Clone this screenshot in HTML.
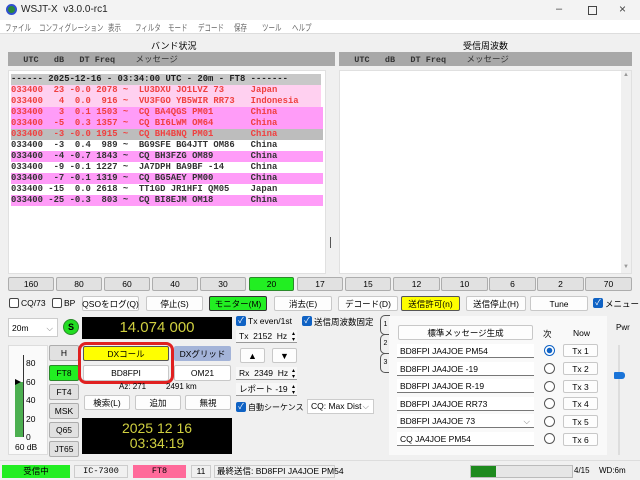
<!DOCTYPE html>
<html><head><meta charset="utf-8"><style>
*{box-sizing:border-box;margin:0;padding:0}
body{width:640px;height:480px;overflow:hidden;background:#f0f0f0;font-family:"Liberation Sans","Noto Sans CJK JP",sans-serif;font-size:8.5px;color:#000;position:relative}
.a{position:absolute;white-space:nowrap}
.b{position:absolute;background:#fdfdfd;border:1px solid #c8c8c8;border-radius:2px;text-align:center;font-size:8.5px;display:flex;align-items:center;justify-content:center;white-space:nowrap}
.g{background:#e1e1e1;border-color:#adadad}
.mono{font-family:"Liberation Mono","Noto Sans CJK JP",monospace}
.row{position:absolute;left:11px;height:11px;line-height:11px;font-family:"Liberation Mono",monospace;font-size:8.9px;font-weight:bold;white-space:pre;color:#333}
.cb{position:absolute;width:10px;height:10px;border-radius:2px;background:#0f62c4;color:#fff;font-size:8px;line-height:10px;text-align:center}
.cbe{position:absolute;width:10px;height:10px;border:1px solid #444;border-radius:2px;background:#fff}
.fld{position:absolute;left:397px;width:137px;height:14px;background:#fff;border-bottom:1px solid #777;font-size:8.5px;line-height:14px;padding-left:3px}
.rad{position:absolute;left:544px;width:11px;height:11px;border:1px solid #555;border-radius:50%;background:#fff}
.tx{position:absolute;left:563px;width:35px;height:13px}
.m{position:absolute;top:21px;font-size:9px;color:#666;white-space:nowrap;transform:scaleX(0.72);transform-origin:0 0}
</style></head><body>
<div class="a" style="left:0;top:0;width:640px;height:20px;background:#f3f3f3"></div>
<div class="a" style="left:6px;top:4px;width:11px;height:11px;border-radius:50%;background:#2a8a3a;border:2px solid #3050d0"></div>
<div class="a" style="left:21px;top:4px;font-size:10px;color:#222">WSJT-X&nbsp; v3.0.0-rc1</div>
<div class="a" style="left:556px;top:3px;font-size:11px;color:#444">–</div>
<div class="a" style="left:588px;top:6px;width:9px;height:9px;border:1px solid #444"></div>
<div class="a" style="left:619px;top:2px;font-size:12px;color:#444">×</div>
<div class="a" style="left:0;top:20px;width:640px;height:13px;background:#fff"></div>
<div class="m" style="left:5px">ファイル</div>
<div class="m" style="left:39px">コンフィグレーション</div>
<div class="m" style="left:108px">表示</div>
<div class="m" style="left:135px">フィルタ</div>
<div class="m" style="left:168px">モード</div>
<div class="m" style="left:198px">デコード</div>
<div class="m" style="left:234px">保存</div>
<div class="m" style="left:262px">ツール</div>
<div class="m" style="left:292px">ヘルプ</div>
<div class="a" style="left:0;top:33px;width:640px;height:1px;background:#ddd"></div>
<div class="a" style="left:151px;top:39px;font-size:9px">バンド状況</div>
<div class="a" style="left:463px;top:39px;font-size:9px">受信周波数</div>
<div class="a mono" style="left:8px;top:52px;width:327px;height:14px;background:#a8a8a8;font-size:8.5px;line-height:14px;font-weight:bold;color:#333;white-space:pre">   UTC   dB   DT Freq    <span style="font-family:'Noto Sans CJK JP';font-weight:normal">メッセージ</span></div>
<div class="a mono" style="left:339px;top:52px;width:293px;height:14px;background:#a8a8a8;font-size:8.5px;line-height:14px;font-weight:bold;color:#333;white-space:pre">   UTC   dB   DT Freq    <span style="font-family:'Noto Sans CJK JP';font-weight:normal">メッセージ</span></div>
<div class="a" style="left:8px;top:70px;width:318px;height:204px;background:#fff;border:1px solid #e0e0e0"></div>
<div class="a" style="left:329px;top:70px;width:6px;height:204px;background:#f0f0f0"></div>
<div class="a" style="left:330px;top:237px;width:1px;height:11px;background:#555"></div>
<div class="row" style="top:74px;width:310px;background:#c8c8c8;color:#222">------ 2025-12-16 - 03:34:00 UTC - 20m - FT8 -------</div>
<div class="row" style="top:85px;width:310px;background:#ffd0f0;color:#f04040">033400  23 -0.0 2078 ~  LU3DXU JO1LVZ 73     Japan</div>
<div class="row" style="top:96px;width:310px;background:#ffd0f0;color:#f04040">033400   4  0.0  916 ~  VU3FGO YB5WIR RR73   Indonesia</div>
<div class="row" style="top:107px;width:312px;background:#ff9cf8;color:#f04040">033400   3  0.1 1503 ~  CQ BA4QGS PM01       China</div>
<div class="row" style="top:118px;width:312px;background:#ff9cf8;color:#f04040">033400  -5  0.3 1357 ~  CQ BI6LWM OM64       China</div>
<div class="row" style="top:129px;width:312px;background:#bdbdbd;color:#f04040">033400  -3 -0.0 1915 ~  CQ BH4BNQ PM01       China</div>
<div class="row" style="top:140px">033400  -3  0.4  989 ~  BG9SFE BG4JTT OM86   China</div>
<div class="row" style="top:151px;width:312px;background:#ff9cf8">033400  -4 -0.7 1843 ~  CQ BH3FZG OM89       China</div>
<div class="row" style="top:162px">033400  -9 -0.1 1227 ~  JA7DPH BA9BF -14     China</div>
<div class="row" style="top:173px;width:312px;background:#ff9cf8">033400  -7 -0.1 1319 ~  CQ BG5AEY PM00       China</div>
<div class="row" style="top:184px">033400 -15  0.0 2618 ~  TT1GD JR1HFI QM05    Japan</div>
<div class="row" style="top:195px;width:312px;background:#ff9cf8">033400 -25 -0.3  803 ~  CQ BI8EJM OM18       China</div>
<div class="a" style="left:339px;top:70px;width:293px;height:204px;background:#fff;border:1px solid #e0e0e0"></div>
<div class="a" style="left:621px;top:71px;width:10px;height:202px;background:#f0f0f0;color:#999;font-size:6px;text-align:center;line-height:8px">▲</div>
<div class="a" style="left:621px;top:264px;width:10px;color:#999;font-size:6px;text-align:center">▼</div>
<div class="b g" style="left:8px;top:277px;width:46px;height:14px">160</div>
<div class="b g" style="left:56px;top:277px;width:46px;height:14px">80</div>
<div class="b g" style="left:104px;top:277px;width:46px;height:14px">60</div>
<div class="b g" style="left:152px;top:277px;width:46px;height:14px">40</div>
<div class="b g" style="left:200px;top:277px;width:46px;height:14px">30</div>
<div class="b" style="left:249px;top:277px;width:45px;height:14px;background:#22ee22;border-color:#2a8a2a">20</div>
<div class="b g" style="left:297px;top:277px;width:46px;height:14px">17</div>
<div class="b g" style="left:345px;top:277px;width:46px;height:14px">15</div>
<div class="b g" style="left:393px;top:277px;width:47px;height:14px">12</div>
<div class="b g" style="left:441px;top:277px;width:47px;height:14px">10</div>
<div class="b g" style="left:489px;top:277px;width:47px;height:14px">6</div>
<div class="b g" style="left:537px;top:277px;width:47px;height:14px">2</div>
<div class="b g" style="left:585px;top:277px;width:47px;height:14px">70</div>
<div class="cbe" style="left:9px;top:298px"></div><div class="a" style="left:21px;top:298px">CQ/73</div>
<div class="cbe" style="left:52px;top:298px"></div><div class="a" style="left:64px;top:298px">BP</div>
<div class="b" style="left:82px;top:296px;width:57px;height:15px">QSOをログ(Q)</div>
<div class="b" style="left:146px;top:296px;width:57px;height:15px">停止(S)</div>
<div class="b" style="left:209px;top:296px;width:58px;height:15px;background:#22ee22;border:1px solid #333">モニター(M)</div>
<div class="b" style="left:274px;top:296px;width:58px;height:15px">消去(E)</div>
<div class="b" style="left:338px;top:296px;width:60px;height:15px">デコード(D)</div>
<div class="b" style="left:401px;top:296px;width:59px;height:15px;background:#ffff00;border:1px solid #555">送信許可(n)</div>
<div class="b" style="left:466px;top:296px;width:60px;height:15px">送信停止(H)</div>
<div class="b" style="left:530px;top:296px;width:58px;height:15px">Tune</div>
<div class="cb" style="left:593px;top:298px">✓</div><div class="a" style="left:605px;top:298px">メニュー</div>
<div class="a" style="left:8px;top:318px;width:50px;height:19px;background:#fff;border:1px solid #ccc;padding:4px 3px">20m<span style="position:absolute;right:4px;color:#777">⌵</span></div>
<div class="a" style="left:63px;top:319px;width:16px;height:16px;border-radius:50%;background:#22dd22;border:1px solid #2a8a2a;text-align:center;font-weight:bold;line-height:14px;font-size:9px">S</div>
<div class="a" style="left:82px;top:317px;width:150px;height:22px;background:#000;color:#d0d040;font-size:15px;text-align:center;line-height:22px">14.074 000</div>
<div class="a" style="left:8px;top:345px;width:40px;height:110px;background:#fafafa;border:1px solid #ddd"></div>
<div class="a" style="left:15px;top:382px;width:8px;height:55px;background:#4caf50"></div>
<div class="a" style="left:23px;top:355px;width:1px;height:82px;background:#333"></div>
<div class="a" style="left:15px;top:379px;width:0;height:0;border-left:6px solid #000;border-top:3px solid transparent;border-bottom:3px solid transparent"></div>
<div class="a" style="left:26px;top:354px;font-size:8.5px;line-height:18.5px">80<br>60<br>40<br>20<br>0</div>
<div class="a" style="left:15px;top:442px;font-size:8.5px">60 dB</div>
<div class="b g" style="left:49px;top:345px;width:30px;height:16px">H</div>
<div class="b" style="left:49px;top:365px;width:30px;height:16px;background:#22ee22;border-color:#2a8a2a">FT8</div>
<div class="b g" style="left:49px;top:384px;width:30px;height:16px">FT4</div>
<div class="b g" style="left:49px;top:403px;width:30px;height:16px">MSK</div>
<div class="b g" style="left:49px;top:422px;width:30px;height:16px">Q65</div>
<div class="b g" style="left:49px;top:441px;width:30px;height:16px">JT65</div>
<div class="b" style="left:83px;top:346px;width:86px;height:15px;background:#ffff00;border:1px solid #555">DXコール</div>
<div class="b" style="left:174px;top:346px;width:57px;height:15px;background:#a3b3d8;border-color:#a3b3d8">DXグリッド</div>
<div class="b" style="left:83px;top:365px;width:86px;height:16px;background:#fff">BD8FPI</div>
<div class="b" style="left:174px;top:365px;width:57px;height:16px;background:#fff">OM21</div>
<div class="a" style="left:78px;top:342px;width:96px;height:42px;border:3px solid #e02020;border-radius:8px"></div>
<div class="a" style="left:119px;top:382px;font-size:8px">Az: 271</div>
<div class="a" style="left:166px;top:382px;font-size:8px">2491 km</div>
<div class="b" style="left:84px;top:395px;width:46px;height:15px">検索(L)</div>
<div class="b" style="left:135px;top:395px;width:46px;height:15px">追加</div>
<div class="b" style="left:185px;top:395px;width:46px;height:15px">無視</div>
<div class="a" style="left:82px;top:418px;width:150px;height:36px;background:#000;color:#d0d040;font-size:14px;text-align:center;line-height:15px;padding-top:3px">2025 12 16<br>03:34:19</div>
<div class="cb" style="left:236px;top:316px">✓</div><div class="a" style="left:248px;top:316px">Tx even/1st</div>
<div class="cb" style="left:302px;top:316px">✓</div><div class="a" style="left:314px;top:316px">送信周波数固定</div>
<div class="a" style="left:236px;top:330px;width:61px;height:13px;border-bottom:1px solid #999;background:#f7f7f7;padding-left:3px;line-height:13px">Tx&nbsp; 2152&nbsp; Hz<span style="position:absolute;right:2px;font-size:6px;line-height:6px;top:1px">▴<br>▾</span></div>
<div class="b" style="left:240px;top:348px;width:25px;height:15px;font-size:9px">▲</div>
<div class="b" style="left:272px;top:348px;width:25px;height:15px;font-size:9px">▼</div>
<div class="a" style="left:236px;top:367px;width:61px;height:13px;border-bottom:1px solid #999;background:#f7f7f7;padding-left:3px;line-height:13px">Rx&nbsp; 2349&nbsp; Hz<span style="position:absolute;right:2px;font-size:6px;line-height:6px;top:1px">▴<br>▾</span></div>
<div class="a" style="left:236px;top:383px;width:61px;height:13px;border-bottom:1px solid #999;background:#f7f7f7;padding-left:3px;line-height:13px">レポート -19<span style="position:absolute;right:2px;font-size:6px;line-height:6px;top:1px">▴<br>▾</span></div>
<div class="cb" style="left:236px;top:402px">✓</div><div class="a" style="left:248px;top:402px;font-size:8px">自動シーケンス</div>
<div class="a" style="left:307px;top:399px;width:67px;height:15px;background:#fff;border:1px solid #ccc;padding-left:3px;line-height:13px">CQ: Max Dist<span style="position:absolute;right:4px;color:#777">⌵</span></div>
<div class="a" style="left:380px;top:315px;width:10px;height:20px;border:1px solid #555;border-right:none;border-radius:5px 0 0 5px;font-size:7px;text-align:center;line-height:18px">1</div>
<div class="a" style="left:380px;top:334px;width:10px;height:20px;border:1px solid #555;border-right:none;border-radius:5px 0 0 5px;font-size:7px;text-align:center;line-height:18px">2</div>
<div class="a" style="left:380px;top:353px;width:10px;height:20px;border:1px solid #555;border-right:none;border-radius:5px 0 0 5px;font-size:7px;text-align:center;line-height:18px">3</div>
<div class="a" style="left:389px;top:316px;width:218px;height:139px;background:#f9f9f9"></div>
<div class="b" style="left:398px;top:325px;width:135px;height:15px">標準メッセージ生成</div>
<div class="a" style="left:543px;top:328px">次</div>
<div class="a" style="left:573px;top:328px">Now</div>
<div class="fld" style="top:344px">BD8FPI JA4JOE PM54</div>
<div class="fld" style="top:362px">BD8FPI JA4JOE -19</div>
<div class="fld" style="top:379px">BD8FPI JA4JOE R-19</div>
<div class="fld" style="top:397px">BD8FPI JA4JOE RR73</div>
<div class="fld" style="top:414px">BD8FPI JA4JOE 73<span style="position:absolute;right:4px;color:#777">⌵</span></div>
<div class="fld" style="top:432px">CQ JA4JOE PM54</div>
<div class="rad" style="top:345px;border-color:#0f62c4;background:radial-gradient(circle,#0f62c4 2.5px,#fff 3px)"></div>
<div class="rad" style="top:363px"></div>
<div class="rad" style="top:381px"></div>
<div class="rad" style="top:398px"></div>
<div class="rad" style="top:416px"></div>
<div class="rad" style="top:433px"></div>
<div class="b tx" style="top:344px">Tx 1</div>
<div class="b tx" style="top:362px">Tx 2</div>
<div class="b tx" style="top:380px">Tx 3</div>
<div class="b tx" style="top:397px">Tx 4</div>
<div class="b tx" style="top:415px">Tx 5</div>
<div class="b tx" style="top:433px">Tx 6</div>
<div class="a" style="left:616px;top:323px;font-size:8px">Pwr</div>
<div class="a" style="left:618px;top:345px;width:2px;height:110px;background:#ddd"></div>
<div class="a" style="left:614px;top:372px;width:11px;height:7px;background:#1a74d8;border-radius:1px 3px 3px 1px"></div>
<div class="a" style="left:0;top:460px;width:640px;height:20px;background:#f0f0f0;border-top:1px solid #ddd"></div>
<div class="a" style="left:2px;top:465px;width:68px;height:13px;background:#22ee22;text-align:center;line-height:13px">受信中</div>
<div class="a mono" style="left:74px;top:465px;width:54px;height:13px;border:1px solid #ccc;text-align:center;line-height:11px">IC-7300</div>
<div class="a mono" style="left:133px;top:465px;width:53px;height:13px;background:#ff6a9a;text-align:center;line-height:13px">FT8</div>
<div class="a" style="left:191px;top:465px;width:20px;height:13px;border:1px solid #ccc;text-align:center;line-height:11px">11</div>
<div class="a" style="left:214px;top:465px;width:121px;height:13px;border:1px solid #ccc;line-height:11px;padding-left:2px">最終送信: BD8FPI JA4JOE PM54</div>
<div class="a" style="left:470px;top:465px;width:103px;height:13px;background:#e6e6e6;border:1px solid #bbb"></div>
<div class="a" style="left:471px;top:466px;width:25px;height:11px;background:#1e8a1e"></div>
<div class="a" style="left:574px;top:466px;font-size:8px">4/15</div>
<div class="a" style="left:599px;top:466px;font-size:8px">WD:6m</div>
</body></html>
